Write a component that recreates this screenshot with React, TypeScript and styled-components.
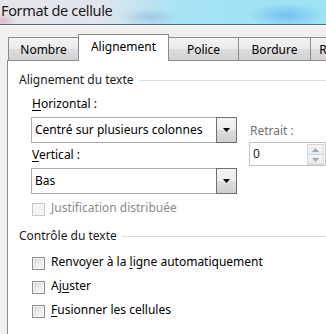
import React from 'react';
import styled, { createGlobalStyle } from 'styled-components';

const GlobalStyle = createGlobalStyle`
  html, body { margin: 0; padding: 0; }
  body {
    background: #f0f0f0;
    font-family: "Noto Sans", "Segoe UI", sans-serif;
    font-size: 12px;
    color: #000;
    overflow: hidden;
  }
`;

const Window = styled.div`
  width: 326px;
  height: 334px;
  overflow: hidden;
  display: flex;
  flex-direction: column;
  background: #f0f0f0;
`;

const TitleBar = styled.div`
  flex: none;
  height: 25px;
  box-sizing: border-box;
  padding: 2px 0 0 1px;
  border-bottom: 1px solid #5d6871;
  box-shadow: 0 1px 0 #fafcfd;
  background:
    radial-gradient(ellipse 38px 12px at 286px 15px, rgba(80, 165, 235, 0.55), rgba(80, 165, 235, 0)),
    radial-gradient(ellipse 30px 9px at 150px 17px, rgba(130, 170, 210, 0.45), rgba(130, 170, 210, 0)),
    radial-gradient(ellipse 14px 8px at 3px 21px, rgba(225, 140, 165, 0.5), rgba(225, 140, 165, 0)),
    linear-gradient(90deg, #e6e5ea 0%, #e0e6ec 30%, #c6e3f1 42%, #a6e3f5 56%, #9ee2f6 100%);
`;

const Title = styled.span`
  font-size: 14.5px;
  line-height: 16px;
  letter-spacing: -0.35px;
  color: #1b1b1b;
`;

const TabRow = styled.div`
  flex: none;
  height: 35px;
  box-sizing: border-box;
  padding-left: 8px;
  display: flex;
  align-items: flex-end;
  position: relative;
  z-index: 1;
`;

const Tab = styled.div<{ $w: number; $active?: boolean }>`
  flex: none;
  width: ${(p) => p.$w}px;
  box-sizing: border-box;
  height: ${(p) => (p.$active ? 27 : 23)}px;
  margin-right: -1px;
  margin-bottom: ${(p) => (p.$active ? -1 : 0)}px;
  padding-top: 4px;
  border: 1px solid #898c95;
  border-bottom: none;
  display: flex;
  justify-content: center;
  line-height: 16px;
  white-space: nowrap;
  overflow: hidden;
  position: relative;
  z-index: ${(p) => (p.$active ? 2 : 1)};
  background: ${(p) =>
    p.$active
      ? '#ffffff'
      : 'linear-gradient(180deg, #f3f3f3 0%, #ebebeb 50%, #dddddd 50%, #d2d2d2 100%)'};
`;

const Panel = styled.div`
  flex: 1;
  margin-left: 7px;
  border-top: 1px solid #898c95;
  border-left: 1px solid #898c95;
  background: #ffffff;
  padding: 11px 0 0 11px;
`;

const GroupHeader = styled.div<{ $top?: number }>`
  display: flex;
  align-items: center;
  line-height: 16px;
  height: 16px;
  margin-top: ${(p) => p.$top ?? 0}px;
  color: #1a1a1a;
  white-space: nowrap;
`;

const HeaderLine = styled.div`
  flex: 1;
  height: 1px;
  margin-left: 5px;
  background: #d5dfe5;
`;

const GroupBody = styled.div`
  padding-left: 12px;
`;

const Row = styled.div`
  display: flex;
  align-items: flex-start;
  margin-top: 8px;
`;

const LeftCol = styled.div`
  width: 206px;
  flex: none;
`;

const RightCol = styled.div`
  margin-left: 12px;
  padding-top: 27px;
  flex: 1;
`;

const Label = styled.div<{ $top?: number; $disabled?: boolean }>`
  line-height: 16px;
  padding-left: 1px;
  margin-top: ${(p) => p.$top ?? 0}px;
  color: ${(p) => (p.$disabled ? '#727272' : '#000')};
  white-space: nowrap;
`;

const Mn = styled.span`
  text-decoration: underline;
  text-underline-offset: 2px;
`;

const Combo = styled.div<{ $top: number }>`
  margin-top: ${(p) => p.$top}px;
  height: 26px;
  box-sizing: border-box;
  border: 1px solid #abadb3;
  background: #fff;
  display: flex;
  align-items: center;
`;

const ComboText = styled.span`
  flex: 1;
  padding-left: 3px;
  line-height: 16px;
  white-space: nowrap;
  overflow: hidden;
`;

const DropButton = styled.div`
  flex: none;
  align-self: stretch;
  width: 21px;
  margin: -1px -1px -1px 0;
  box-sizing: border-box;
  border: 1px solid #707070;
  background: linear-gradient(180deg, #f4f4f4 0%, #ececec 50%, #dedede 50%, #cfcfcf 100%);
  display: flex;
  align-items: center;
  justify-content: center;
`;

const Spin = styled.div`
  margin-top: 3px;
  height: 24px;
  width: 77px;
  box-sizing: border-box;
  border: 1px solid #c3c3c3;
  background: #fff;
  display: flex;
  align-items: center;
`;

const SpinText = styled.span`
  flex: 1;
  padding-left: 3px;
  line-height: 16px;
  color: #222;
`;

const SpinButtons = styled.div`
  flex: none;
  align-self: stretch;
  width: 17px;
  margin-right: 1px;
  display: flex;
  flex-direction: column;
`;

const SpinHalf = styled.div`
  flex: 1;
  border: 1px solid #d4d7dc;
  margin-top: -1px;
  background: linear-gradient(180deg, #f6f6f6 0%, #e6e8ea 100%);
  display: flex;
  align-items: center;
  justify-content: center;
  &:first-child { margin-top: 1px; }
`;

const CheckRow = styled.div<{ $top: number }>`
  display: flex;
  align-items: center;
  height: 16px;
  margin-top: ${(p) => p.$top}px;
  padding-left: 1px;
  gap: 6px;
  white-space: nowrap;
`;

const Box = styled.div<{ $disabled?: boolean }>`
  flex: none;
  width: 13px;
  height: 13px;
  margin-top: 2px;
  box-sizing: border-box;
  border: 1px solid ${(p) => (p.$disabled ? '#c8c8c8' : '#8e8f8f')};
  background: ${(p) =>
    p.$disabled ? '#f4f4f4' : 'linear-gradient(135deg, #d2d4d6 0%, #eeeeee 60%, #f8f8f8 100%)'};
  box-shadow: inset 0 0 0 1px ${(p) => (p.$disabled ? '#f8f8f8' : '#f3f3f3')};
`;

const CheckText = styled.span<{ $disabled?: boolean }>`
  line-height: 16px;
  color: ${(p) => (p.$disabled ? '#8a8a8a' : '#000')};
`;

const Arrow = ({ up, color }: { up?: boolean; color: string }) => (
  <svg width="7" height="4" viewBox="0 0 7 4">
    <path d={up ? 'M0 4 L3.5 0 L7 4 Z' : 'M0 0 L7 0 L3.5 4 Z'} fill={color} />
  </svg>
);

export default function App() {
  return (
    <>
      <GlobalStyle />
      <Window>
        <TitleBar>
          <Title>Format de cellule</Title>
        </TitleBar>
        <TabRow>
          <Tab $w={71}>Nombre</Tab>
          <Tab $w={91} $active>
            Alignement
          </Tab>
          <Tab $w={71}>Police</Tab>
          <Tab $w={73}>Bordure</Tab>
          <Tab $w={90}>Remplissage</Tab>
        </TabRow>
        <Panel>
          <GroupHeader>
            Alignement du texte
            <HeaderLine />
          </GroupHeader>
          <GroupBody>
            <Row>
              <LeftCol>
                <Label>
                  <Mn>H</Mn>orizontal :
                </Label>
                <Combo $top={5}>
                  <ComboText>Centré sur plusieurs colonnes</ComboText>
                  <DropButton>
                    <Arrow color="#000" />
                  </DropButton>
                </Combo>
                <Label $top={4}>
                  <Mn>V</Mn>ertical :
                </Label>
                <Combo $top={5}>
                  <ComboText>Bas</ComboText>
                  <DropButton>
                    <Arrow color="#000" />
                  </DropButton>
                </Combo>
              </LeftCol>
              <RightCol>
                <Label $disabled>Retrait :</Label>
                <Spin>
                  <SpinText>0</SpinText>
                  <SpinButtons>
                    <SpinHalf>
                      <Arrow up color="#9aaabd" />
                    </SpinHalf>
                    <SpinHalf>
                      <Arrow color="#9aaabd" />
                    </SpinHalf>
                  </SpinButtons>
                </Spin>
              </RightCol>
            </Row>
            <CheckRow $top={6}>
              <Box $disabled />
              <CheckText $disabled>Justification distribuée</CheckText>
            </CheckRow>
          </GroupBody>
          <GroupHeader $top={12}>
            Contrôle du texte
            <HeaderLine />
          </GroupHeader>
          <GroupBody>
            <CheckRow $top={10}>
              <Box />
              <CheckText>
                Renvoyer à la <Mn>l</Mn>igne automatiquement
              </CheckText>
            </CheckRow>
            <CheckRow $top={8}>
              <Box />
              <CheckText>
                Aj<Mn>u</Mn>ster
              </CheckText>
            </CheckRow>
            <CheckRow $top={8}>
              <Box />
              <CheckText>
                <Mn>F</Mn>usionner les cellules
              </CheckText>
            </CheckRow>
          </GroupBody>
          <GroupHeader $top={18}>
            De droite à gauche
            <HeaderLine />
          </GroupHeader>
        </Panel>
      </Window>
    </>
  );
}
